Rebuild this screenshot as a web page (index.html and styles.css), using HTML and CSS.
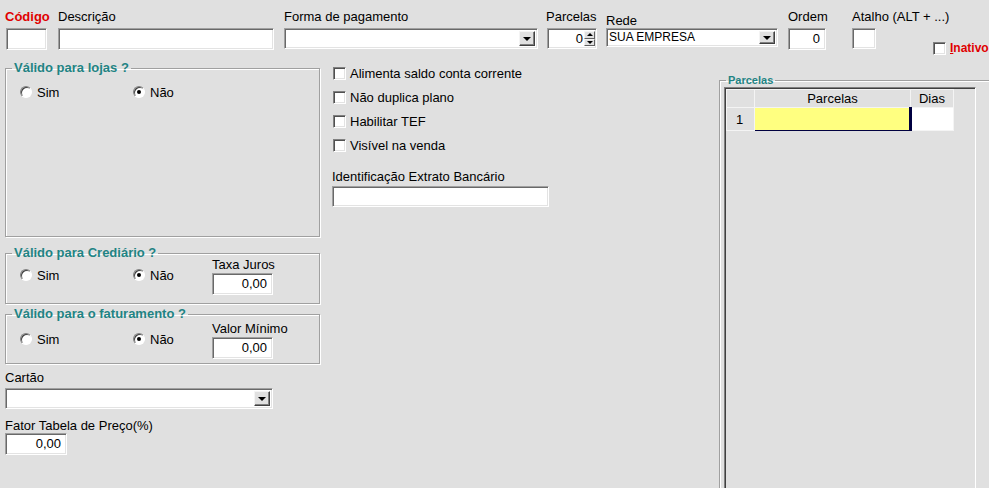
FILE: index.html
```html
<!DOCTYPE html>
<html lang="pt">
<head>
<meta charset="utf-8">
<title>Forma de pagamento</title>
<link rel="stylesheet" href="styles.css">
</head>
<body>
<div class="form">
  <div class="top">
    <div class="col c-codigo">
      <div class="lbl req">Código</div>
      <div class="edit w-codigo"></div>
    </div>
    <div class="col c-desc">
      <div class="lbl">Descrição</div>
      <div class="edit w-desc"></div>
    </div>
    <div class="col c-forma">
      <div class="lbl">Forma de pagamento</div>
      <div class="edit combo w-forma"><span class="ddbtn"><i></i></span></div>
    </div>
    <div class="col c-parc">
      <div class="lbl">Parcelas</div>
      <div class="edit spin w-parc"><span class="val">0</span><span class="spinbtns"><span class="sb up"><i></i></span><span class="sb down"><i></i></span></span></div>
    </div>
    <div class="col c-rede">
      <div class="lbl lbl-rede">Rede</div>
      <div class="edit combo w-rede"><span class="ctext">SUA EMPRESA</span><span class="ddbtn"><i></i></span></div>
    </div>
    <div class="col c-ordem">
      <div class="lbl">Ordem</div>
      <div class="edit num w-ordem">0</div>
    </div>
    <div class="col c-atalho">
      <div class="lbl">Atalho (ALT + ...)</div>
      <div class="edit w-atalho"></div>
    </div>
    <div class="inativo">
      <span class="chk"></span><span class="inativo-lbl"><u>I</u>nativo</span>
    </div>
  </div>

  <div class="main">
    <div class="left">
      <fieldset class="grp g-lojas">
        <legend>Válido para lojas ?</legend>
        <div class="radios r-lojas">
          <label class="opt opt-sim"><span class="radio"></span>Sim</label>
          <label class="opt"><span class="radio on"></span>Não</label>
        </div>
      </fieldset>

      <fieldset class="grp g-cred">
        <legend>Válido para Crediário ?</legend>
        <div class="grp-row">
          <div class="radios r-cred">
            <label class="opt opt-sim"><span class="radio"></span>Sim</label>
            <label class="opt opt-nao"><span class="radio on"></span>Não</label>
          </div>
          <div class="sub sub-cred">
            <div class="lbl">Taxa Juros</div>
            <div class="edit num w-small">0,00</div>
          </div>
        </div>
      </fieldset>

      <fieldset class="grp g-fat">
        <legend>Válido para o faturamento ?</legend>
        <div class="grp-row">
          <div class="radios r-fat">
            <label class="opt opt-sim"><span class="radio"></span>Sim</label>
            <label class="opt opt-nao"><span class="radio on"></span>Não</label>
          </div>
          <div class="sub sub-fat">
            <div class="lbl">Valor Mínimo</div>
            <div class="edit num w-small">0,00</div>
          </div>
        </div>
      </fieldset>

      <div class="lbl l-cartao">Cartão</div>
      <div class="edit combo w-cartao"><span class="ddbtn"><i></i></span></div>

      <div class="lbl l-fator">Fator Tabela de Preço(%)</div>
      <div class="edit num w-fator">0,00</div>
    </div>

    <div class="middle">
      <div class="checks">
        <label class="crow"><span class="chk"></span>Alimenta saldo conta corrente</label>
        <label class="crow"><span class="chk"></span>Não duplica plano</label>
        <label class="crow"><span class="chk"></span>Habilitar TEF</label>
        <label class="crow"><span class="chk"></span>Visível na venda</label>
      </div>
      <div class="lbl l-ident">Identificação Extrato Bancário</div>
      <div class="edit w-ident"></div>
    </div>

    <div class="right">
      <fieldset class="grp g-parc">
        <legend>Parcelas</legend>
        <div class="grid">
          <table>
            <colgroup><col class="k1"><col class="k2"><col class="k3"></colgroup>
            <tr class="hdr"><th></th><th>Parcelas</th><th>Dias</th></tr>
            <tr class="row"><td class="fix">1</td><td class="sel"></td><td class="cell"></td></tr>
          </table>
        </div>
      </fieldset>
    </div>
  </div>
</div>
</body>
</html>
```

FILE: styles.css
```css
* { box-sizing: border-box; }
html, body {
  margin: 0;
  padding: 0;
  width: 989px;
  height: 488px;
  overflow: hidden;
  background: #e0e0e0;
}
body {
  font-family: "Liberation Sans", Arial, sans-serif;
  font-size: 13px;
  color: #000;
}
.form { width: 989px; height: 488px; overflow: hidden; }

.lbl {
  height: 14px;
  line-height: 14px;
  white-space: nowrap;
}
.req { color: #e00000; font-weight: bold; }

/* sunken edit */
.edit {
  position: relative;
  background: #fff;
  border: 1px solid;
  border-color: #a0a0a0 #ffffff #ffffff #a0a0a0;
  box-shadow: inset 1px 1px 0 #696969, inset -1px -1px 0 #e3e3e3;
  flex: none;
}
.num {
  text-align: right;
  padding-right: 5px;
  line-height: 20px;
}

/* top row */
.top {
  display: flex;
  align-items: flex-start;
  height: 58px;
  padding-top: 10px;
}
.col { display: flex; flex-direction: column; flex: none; }
.col .lbl { margin-bottom: 4px; }
.c-codigo { margin-left: 5px; width: 53px; }
.c-desc { width: 226px; }
.c-forma { width: 262px; }
.c-parc { width: 60px; }
.c-rede { width: 182px; }
.c-ordem { width: 64px; }
.c-atalho { width: 81px; }

.w-codigo { margin-left: 1px; width: 41px; height: 22px; }
.w-desc { width: 216px; height: 22px; }
.w-forma { width: 254px; height: 21px; }
.w-parc { margin-left: 1px; width: 50px; height: 21px; }
.c-rede .lbl-rede { height: 18px; line-height: 22px; margin-bottom: 0; }
.w-rede { width: 172px; height: 19px; }
.w-ordem { width: 38px; height: 22px; }
.w-atalho { width: 24px; height: 21px; }

/* combo */
.combo { display: flex; align-items: center; }
.ctext {
  font-size: 12px;
  padding-left: 2px;
  line-height: 15px;
  flex: 1;
  white-space: nowrap;
}
.ddbtn {
  position: absolute;
  right: 2px;
  top: 2px;
  bottom: 2px;
  width: 16px;
  background: #e0e0e0;
  border: 1px solid;
  border-color: #f4f4f4 #404040 #404040 #f4f4f4;
  box-shadow: inset -1px -1px 0 #808080;
  display: flex;
  align-items: center;
  justify-content: center;
}
.ddbtn i {
  display: block;
  width: 0;
  height: 0;
  border-left: 4px solid transparent;
  border-right: 4px solid transparent;
  border-top: 4px solid #000;
  margin-top: 1px;
}

/* spin */
.spin { display: flex; }
.spin .val {
  flex: 1;
  text-align: right;
  padding-right: 1px;
  line-height: 19px;
}
.spinbtns {
  width: 11px;
  display: flex;
  flex-direction: column;
  margin: 2px 1px 2px 0;
}
.sb {
  flex: 1;
  background: #e0e0e0;
  border: 1px solid;
  border-color: #f4f4f4 #606060 #606060 #f4f4f4;
  display: flex;
  align-items: center;
  justify-content: center;
}
.sb i {
  display: block;
  width: 0;
  height: 0;
  border-left: 3px solid transparent;
  border-right: 3px solid transparent;
}
.up i { border-bottom: 3px solid #000; }
.down i { border-top: 3px solid #000; }

/* checkbox */
.chk {
  display: inline-block;
  width: 13px;
  height: 13px;
  background: #fff;
  border: 1px solid;
  border-color: #808080 #ffffff #ffffff #808080;
  box-shadow: inset 1px 1px 0 #505050, inset -1px -1px 0 #e3e3e3;
  flex: none;
}
.inativo {
  display: flex;
  align-items: center;
  margin-top: 31px;
  height: 14px;
  flex: none;
  white-space: nowrap;
}
.inativo .chk { margin-right: 4px; }
.inativo-lbl {
  color: #e00000;
  font-weight: bold;
  font-size: 12px;
}

/* main area */
.main { display: flex; align-items: flex-start; }

.left {
  margin-left: 5px;
  width: 315px;
  flex: none;
  display: flex;
  flex-direction: column;
}

.grp {
  margin: 0;
  padding: 0;
  border: 1px solid #a0a0a0;
  box-shadow: inset 1px 1px 0 #ffffff, 1px 1px 0 #ffffff;
  min-width: 0;
}
.grp legend {
  margin-left: 6px;
  padding: 0 2px;
  font-weight: bold;
  color: #1f8484;
  line-height: 14px;
  height: 14px;
}

.g-lojas { margin-top: 3px; height: 176px; }
.g-cred { margin-top: 9px; height: 58px; }
.g-fat { margin-top: 3px; height: 57px; }

.radios { display: flex; align-items: center; height: 16px; }
.opt { display: flex; align-items: center; height: 16px; flex: none; }
.opt .radio { margin-right: 5px; }
.opt-sim { margin-left: 14px; width: 113px; }
.opt-nao { width: 79px; }
.r-lojas { margin-top: 9px; }

.radio {
  display: inline-block;
  width: 12px;
  height: 12px;
  border-radius: 50%;
  background: #fff;
  border: 1px solid;
  border-color: #808080 #ffffff #ffffff #808080;
  box-shadow: inset 1px 1px 0 #404040;
  position: relative;
  flex: none;
}
.radio.on::after {
  content: "";
  position: absolute;
  left: 3px;
  top: 3px;
  width: 4px;
  height: 4px;
  border-radius: 50%;
  background: #000;
}

.grp-row { display: flex; align-items: flex-start; }
.r-cred { margin-top: 7px; }
.r-fat { margin-top: 10px; }
.sub { display: flex; flex-direction: column; flex: none; }
.sub .lbl { margin-bottom: 1px; }
.sub-cred { margin-top: -2px; }
.sub-fat { margin-top: 1px; }
.w-small { width: 61px; height: 22px; }

.l-cartao { margin-top: 7px; }
.w-cartao { margin-top: 3px; width: 268px; height: 21px; }
.l-fator { margin-top: 10px; }
.w-fator { width: 62px; height: 22px; }

/* middle */
.middle {
  margin-left: 12px;
  width: 216px;
  flex: none;
  display: flex;
  flex-direction: column;
}
.checks { margin-top: 3px; }
.crow {
  display: flex;
  align-items: center;
  height: 24px;
  white-space: nowrap;
}
.crow .chk { margin-left: 1px; margin-right: 4px; }
.l-ident { margin-top: 13px; }
.w-ident { margin-top: 2px; width: 217px; height: 21px; }

/* right */
.right { margin-left: 171px; flex: none; }
.g-parc { margin-top: 16px; width: 290px; height: 440px; }
.g-parc legend {
  font-size: 11px;
  line-height: 12px;
  height: 12px;
}
.grid {
  margin: 1px 0 0 4px;
  width: 252px;
  height: 420px;
  background: #e0e0e0;
  border: 1px solid;
  border-color: #808080 #ffffff #ffffff #808080;
  box-shadow: inset 1px 1px 0 #404040;
  padding: 1px 0 0 1px;
}
.grid table {
  border-collapse: collapse;
  table-layout: fixed;
  width: 227px;
}
.k1 { width: 28px; }
.k2 { width: 156px; }
.k3 { width: 43px; }
.grid th, .grid td {
  border: 1px solid #f4f4f4;
  padding: 0;
  font-weight: normal;
}
.grid .hdr th {
  height: 18px;
  text-align: center;
  line-height: 16px;
  background: #e0e0e0;
}
.grid .row td { height: 23px; }
.grid .fix {
  background: #e0e0e0;
  padding-left: 9px;
}
.grid .sel {
  background: #ffff80;
  border: 1px solid #000040;
  border-right: 3px solid #000040;
}
.grid .cell { background: #fff; }
```
